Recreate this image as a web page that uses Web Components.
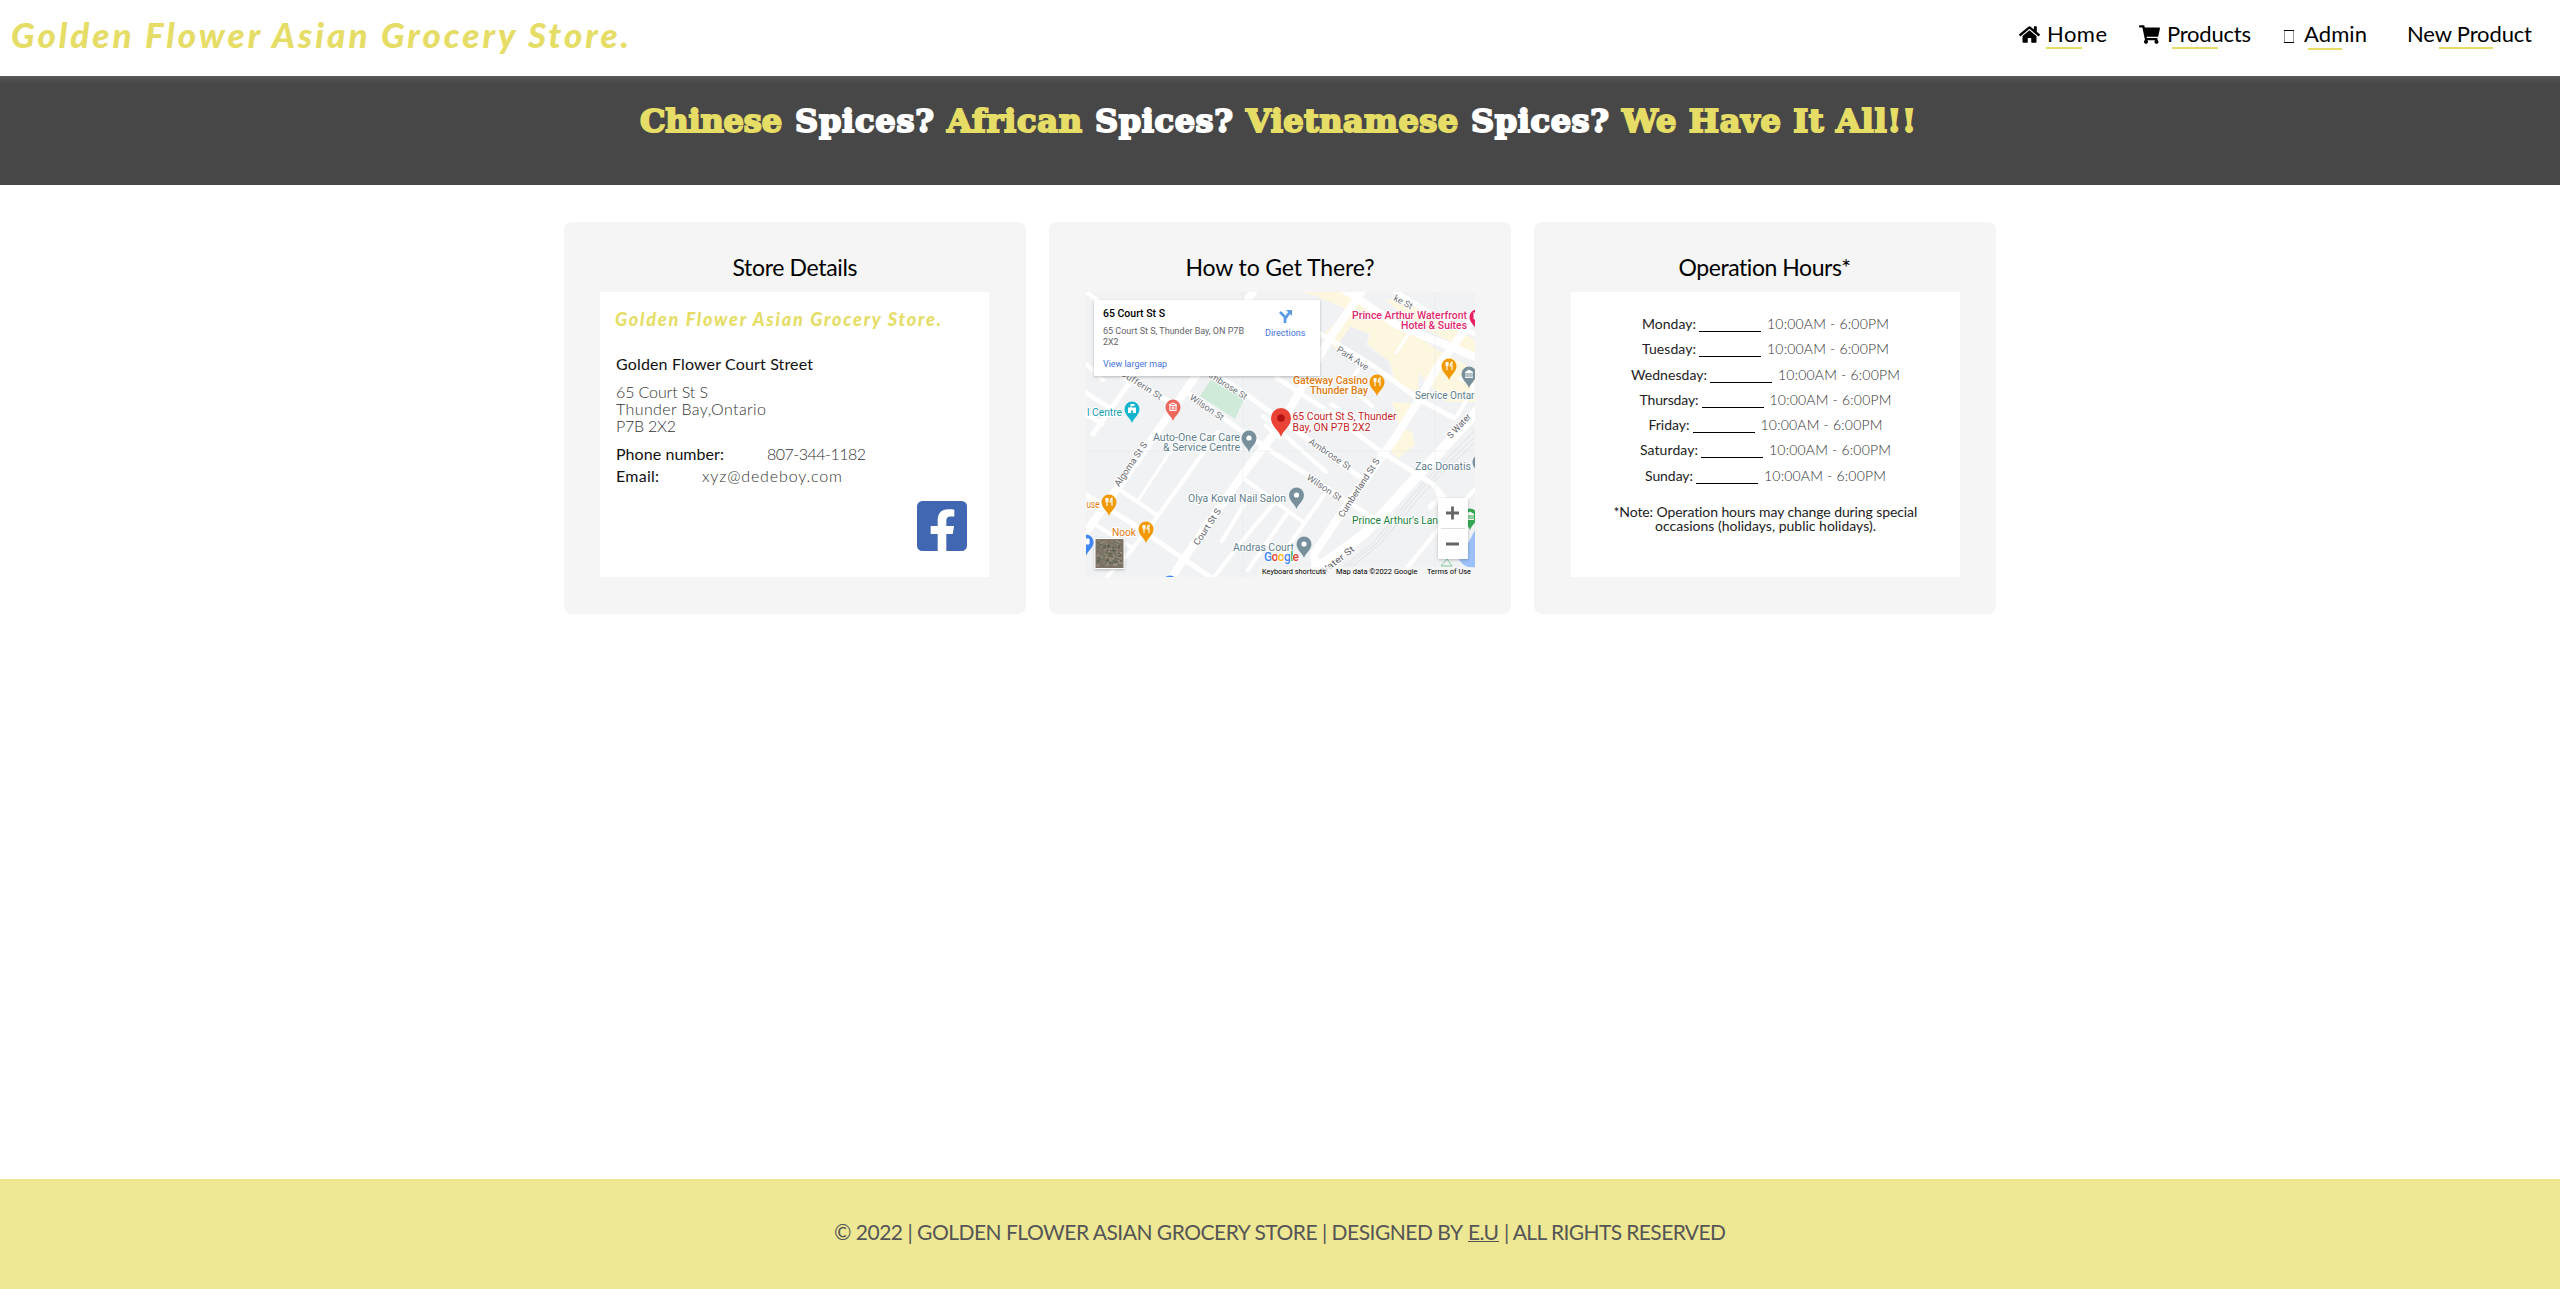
<!DOCTYPE html>
<html lang="en">
<head>
<meta charset="utf-8">
<title>Golden Flower Asian Grocery Store</title>
<style>
html,body{margin:0;background:#fff}
body{font-family:Lato,"Liberation Sans",sans-serif;color:#000;min-height:1289px}
</style>
</head>
<body>
<store-page></store-page>
<script>
const make = (name, html, setup) => customElements.define(name, class extends HTMLElement {
  constructor(){ super(); this.attachShadow({mode:'open'}); }
  connectedCallback(){
    this.shadowRoot.innerHTML = typeof html === 'function' ? html(this) : html;
    if (setup) setup(this);
  }
});

/* Page frame: header, banner, three cards, footer */
make('store-page', `<style>
:host{display:flex;flex-direction:column;height:1289px}
main{flex:1;display:flex;justify-content:center;gap:23px;padding-top:37px;align-items:flex-start}
</style>
<site-header></site-header>
<spice-banner></spice-banner>
<main>
<info-card heading="Store Details" w="125" inset="36"><store-details></store-details></info-card>
<info-card heading="How to Get There?" w="189" inset="37"><store-map></store-map></info-card>
<info-card heading="Operation Hours*" w="173" inset="37"><opening-hours></opening-hours></info-card>
</main>
<site-footer></site-footer>`);

make('site-header', `<style>
:host{display:flex;height:76px;justify-content:space-between;box-sizing:border-box;padding:0 27px 0 11px;background:#fff}
.logo{font:italic 900 35px/60px Lato,sans-serif;color:#e5dd66;padding-top:4px}
nav{display:flex;align-items:flex-start}
</style>
<div class="logo"><fit-text w="618">Golden Flower Asian Grocery Store.</fit-text></div>
<nav>
<nav-item icon="home" w="60" gap="8" ux="-2" uw="36" end="31">Home</nav-item>
<nav-item icon="cart" w="84" gap="8" ux="4" uw="46" end="32">Products</nav-item>
<nav-item icon="box" w="63" gap="11" ux="3" uw="34" end="40">Admin</nav-item>
<nav-item w="125" gap="0" ux="31" uw="54" end="0">New Product</nav-item>
</nav>`);

const icons = {
  home:'<svg width="21" height="19" viewBox="0 0 576 512"><path d="M280.37 148.26L96 300.11V464a16 16 0 0 0 16 16l112.06-.29a16 16 0 0 0 15.92-16V368a16 16 0 0 1 16-16h64a16 16 0 0 1 16 16v95.64a16 16 0 0 0 16 16.05L464 480a16 16 0 0 0 16-16V300L295.67 148.26a12.19 12.19 0 0 0-15.3 0zM571.6 251.47L488 182.56V44.05a12 12 0 0 0-12-12h-56a12 12 0 0 0-12 12v72.61L318.47 43a48 48 0 0 0-61 0L4.34 251.47a12 12 0 0 0-1.6 16.9l25.5 31A12 12 0 0 0 45.15 301l235.22-193.74a12.19 12.19 0 0 1 15.3 0L530.9 301a12 12 0 0 0 16.9-1.6l25.5-31a12 12 0 0 0-1.7-16.93z"/></svg>',
  cart:'<svg width="21" height="19" viewBox="0 0 576 512"><path d="M528.12 301.319l47.273-208C578.806 78.301 567.391 64 551.99 64H159.208l-9.166-44.81C147.758 8.021 137.93 0 126.529 0H24C10.745 0 0 10.745 0 24v16c0 13.255 10.745 24 24 24h69.883l70.248 343.435C147.325 417.1 136 435.222 136 456c0 30.928 25.072 56 56 56s56-25.072 56-56c0-15.674-6.447-29.835-16.824-40h209.647C430.447 426.165 424 440.326 424 456c0 30.928 25.072 56 56 56s56-25.072 56-56c0-22.172-12.888-41.332-31.579-50.405l5.517-24.276c3.413-15.018-8.002-29.319-23.403-29.319H218.117l-6.545-32h293.145c11.206 0 20.92-7.754 23.403-18.681z"/></svg>',
  box:'<svg width="10" height="19" viewBox="0 0 10 19"><path d="M.5 5V18M9.5 5V18" stroke="#999" fill="none"/><path d="M0 5.5H10M0 17.5H10" stroke="#000"/></svg>'
};
make('nav-item', el => `<style>
:host{display:flex;margin-right:${el.getAttribute('end')}px}
svg{display:block;margin:25px ${el.getAttribute('gap')}px 0 0;flex:none}
.t{display:flex;flex-direction:column;font:22px/26px Lato,sans-serif;padding-top:21px}
i{display:block;width:${el.getAttribute('uw')}px;height:2px;background:#e5dd66;margin:${el.getAttribute('icon')==='box'?1:0}px 0 0 ${el.getAttribute('ux')}px}
fit-text{margin:0 1px 0 -1px}
</style>${icons[el.getAttribute('icon')]||''}<div class="t"><fit-text w="${el.getAttribute('w')}"><slot></slot></fit-text><i></i></div>`);

make('spice-banner', `<style>
:host{display:flex;justify-content:flex-start;height:109px;box-sizing:border-box;padding:24.5px 0 0 640px;
background:linear-gradient(#5a5a5a 0,#4d4d4d 4px,#474747 9px);color:#e5dd66;font:bold 32px/40px "DejaVu Serif",serif;-webkit-text-stroke:2px currentColor;gap:13px}
b{color:#fff;font-weight:inherit}
</style>
<fit-text w="142">Chinese</fit-text><b><fit-text w="139">Spices?</fit-text></b>
<fit-text w="135">African</fit-text><b><fit-text w="138">Spices?</fit-text></b>
<fit-text w="212">Vietnamese</fit-text><b><fit-text w="138">Spices?</fit-text></b>
<fit-text w="294">We Have It All!!</fit-text>`);

make('info-card', el => `<style>
:host{display:flex;flex-direction:column;width:462px;height:392px;border-radius:8px;background:#f5f5f5}
h2{margin:0;padding:31px 0 11px;font:400 23px/28px Lato,sans-serif;display:flex;justify-content:center}
.panel{width:389px;height:285px;background:#fff;margin-left:${el.getAttribute('inset')}px}
</style><h2><fit-text w="${el.getAttribute('w')}">${el.getAttribute('heading')}</fit-text></h2><div class="panel"><slot></slot></div>`);

make('store-details', `<style>
:host{display:flex;flex-direction:column;padding:15px 22px 0 16px;height:270px;box-sizing:border-box;font:16px/17px Lato,sans-serif;color:#111}
.logo{font:italic 900 18px/24px Lato,sans-serif;color:#e5dd66;margin-left:-1px}
.name{margin-top:24px}
.addr{display:flex;flex-direction:column;margin-top:11px;font-weight:300;color:#333}
.row{display:flex;gap:43px;margin-top:11px}.row+.row{margin-top:5px}
.v{font-weight:300;color:#333}
.fb{align-self:flex-end;display:block;margin-top:17px;flex:none}
</style>
<fit-text class="logo" w="326">Golden Flower Asian Grocery Store.</fit-text>
<fit-text class="name" w="197">Golden Flower Court Street</fit-text>
<div class="addr"><fit-text w="92">65 Court St S</fit-text><fit-text w="150">Thunder Bay,Ontario</fit-text><fit-text w="60">P7B 2X2</fit-text></div>
<div class="row"><fit-text w="108">Phone number:</fit-text><fit-text class="v" w="99">807-344-1182</fit-text></div>
<div class="row"><fit-text w="43">Email:</fit-text><fit-text class="v" w="140">xyz@dedeboy.com</fit-text></div>
<svg class="fb" width="50" height="50" viewBox="0 32 448 448"><path fill="#4267b2" d="M400 32H48A48 48 0 0 0 0 80v352a48 48 0 0 0 48 48h137.25V327.69h-63V256h63v-54.64c0-62.15 37-96.48 93.67-96.48 27.14 0 55.52 4.84 55.52 4.84v61h-31.27c-30.81 0-40.42 19.12-40.42 38.73V256h68.78l-11 71.69h-57.78V480H400a48 48 0 0 0 48-48V80a48 48 0 0 0-48-48z"/></svg>`);

const days = [['Monday',54],['Tuesday',54],['Wednesday',76],['Thursday',59],['Friday',41],['Saturday',58],['Sunday',48]];
make('opening-hours', () => `<style>
:host{display:flex;flex-direction:column;align-items:center;padding-top:19px;font:14px/25.3px Lato,sans-serif;color:#222}
.row{display:flex;height:25.3px}
i{width:62px;height:1px;background:#000;margin:20px 6px 0 3px}
.time{font-weight:300;color:#333}
.note{display:flex;flex-direction:column;align-items:center;line-height:14.4px;margin-top:17px}
</style>${days.map(([d,w])=>`<div class="row"><fit-text w="${w}">${d}:</fit-text><i></i><fit-text class="time" w="122">10:00AM - 6:00PM</fit-text></div>`).join('')}
<div class="note"><fit-text w="304">*Note: Operation hours may change during special</fit-text><fit-text w="221">occasions (holidays, public holidays).</fit-text></div>`);

/* Map: street canvas drawn in a single SVG */
const road = (w, d) => `<path d="${d}" stroke-width="${w}"/>`;
const label = (x, y, w, t, c, o='') => `<text x="${x}" y="${y}" textLength="${w}" lengthAdjust="spacingAndGlyphs" fill="${c}" ${o}>${t}</text>`;
const street = (x, y, a, w, t, c='#70757a') => `<text transform="translate(${x} ${y}) rotate(${a})" textLength="${w}" lengthAdjust="spacingAndGlyphs" font-size="9" fill="${c}">${t}</text>`;
const glyphs = {
  food:'<path d="M-3-4v3q0 1 1 1v4M-1-4v3q0 1-1 1M-2-4v3M3 4v-8q-2 1-2 4h2" fill="none" stroke="#fff" stroke-width="1.1"/>',
  dot:'<circle r="2.6" fill="#fff"/>',
  civic:'<path d="M-4-1.5L0-4L4-1.5ZM-3-1v4M-1-1v4M1-1v4M3-1v4M-4 3.5h8" fill="#fff" stroke="#fff" stroke-width=".9"/>',
  hall:'<path d="M-4 4V-1.5H-1.5V-5H2.5V-3H-.5V-1.5H4V4H1V1.5H-1V4Z" fill="#fff"/>',
  med:'<path d="M-4-2L0-4L4-2M-3-1.5v5h6v-5ZM0-.7v3.4M-1.7 1h3.4" fill="none" stroke="#fff" stroke-width="1.1"/>',
  bag:'<path d="M-3-3h6v5h-6zM-4-4h2" fill="#fff" stroke="#fff"/>'
};
const pin = (x, y, c, g) => `<g transform="translate(${x} ${y})"><path d="M0 14C-1.5 9-7.5 6-7.5 0A7.5 7.5 0 1 1 7.5 0C7.5 6 1.5 9 0 14Z" fill="${c}"/>${glyphs[g]}</g>`;
let tiles = '', seed = 7;
const rnd = () => (seed = (seed * 16807) % 2147483647) / 2147483647;
for (let i = 0; i < 230; i++) {
  const px = 10.5 + rnd() * 24, py = 248 + rnd() * 25;
  const c = ['#5f6650','#a39686','#857a6b','#6b7260','#56604c','#988a7c','#8d8276'][Math.floor(rnd() * 7)];
  tiles += `<rect x="${px.toFixed(1)}" y="${py.toFixed(1)}" width="${(1 + rnd() * 2).toFixed(1)}" height="${(1 + rnd()).toFixed(1)}" fill="${c}"/>`;
}
const G='#607d8b', O='#e07a10';
make('store-map', () => `<style>:host{display:block;width:389px;height:285px}svg{display:block}text{font-family:Roboto,sans-serif}</style>
<svg width="389" height="285" viewBox="0 0 389 285" font-size="10">
<defs><filter id="sh" x="-10%" y="-10%" width="120%" height="130%"><feDropShadow dx="0" dy="1" stdDeviation="1.5" flood-opacity=".25"/></filter></defs>
<rect width="389" height="285" fill="#f1f2f4"/>
<g fill="#fef7e0">
<path d="M216 0H266L286 14L311 31L306 55L325 70L333 78L332 100L310 93L304 70L281 52L284 42L265 35L250 58L238 42L262 18L230 4Z"/>
<path d="M311 31L355 60L389 78V62L345 40L309 16L300 8L311 6L350 26L389 48V110H360L342 92L325 70L306 55Z"/>
<path d="M306 110L330 112L322 128L311 143L299 155L312 166L329 153L326 140L314 135Z"/>
</g>
<path d="M265 34L282 43L279 54L303 70L302 87L250 55Z" fill="#eceef1"/>
<path d="M126 86L160 103L149 127L114 104Z" fill="#cfead9"/>
<path d="M389 238L380 255L373 268Q380 277 389 276Z" fill="#9cc0f9"/>
<g fill="none" stroke="#dfe2e5" stroke-width="1"><path d="M244 285L287 251L335 193L389 138M248 285L291 251L339 193L389 145M253 285L294 252L346 191L389 150"/></g>
<g fill="none" stroke="#fff" stroke-linecap="round">
${road(8,'M-4 246L69 143L109 85L167 0')}${road(8,'M83 290L97 268L157 182L194 134L244 46L278 -4')}
${road(8,'M232 290L228 262L254 223L311 143L331 111L351 76L392 20')}
${road(10,'M228 278L277 243L351 163L394 116')}${road(8,'M256 -4L311 33L394 67')}
${road(5,'M305 -3L354 27L394 44')}${road(5,'M228 38L286 73L334 108L368 126')}
${road(5,'M80 49L161 103L274 185')}${road(5,'M101 100L137 126L194 165L287 226')}
${road(5,'M191 86L237 116L294 159L348 193L356 210M348 193L357 204L344 215')}
${road(4,'M-3 -2L22 15')}${road(4,'M-3 69L17 88')}${road(5,'M-3 99L24 116M-3 120L16 132')}
${road(5,'M-3 201L44 230L127 287')}${road(5,'M20 73L37 84L88 112')}${road(5,'M44 90L7 142')}
${road(4,'M34 198L71 223')}${road(3,'M86 157L51 210')}${road(4,'M132 140L71 225L44 260L18 288')}
${road(4,'M10 233L45 255')}${road(4,'M157 186L194 213L217 230')}${road(4,'M163 204L136 249')}
${road(4,'M190 209L161 243L128 285')}${road(4,'M202 220L162 278')}${road(4,'M238 203L194 266')}
${road(4,'M245 112L284 137M272 78L262 94L286 114')}${road(3,'M310 61L322 43')}${road(4,'M374 86L389 94M389 93L371 124')}
${road(4,'M389 197L350 240L311 288')}${road(4,'M177 124L240 180M194 145L180 134')}
</g>
<path d="M0 159H389M157 0V285M349 0V285" stroke="#e2e5e7" stroke-width=".5"/>
<g stroke="#fff" stroke-width="2" paint-order="stroke" stroke-linejoin="round">
${street(33,195,-56,51,'Algoma St S','#5f6368')}${street(112,254,-56,42,'Court St S','#5f6368')}
${street(257,226,-57,68,'Cumberland St S','#5f6368')}${street(222,151,34,49,'Ambrose St')}
${street(220,187,34,40,'Wilson St')}${street(103,107,34,39,'Wilson St')}${street(119,83,32,47,'Ambrose St')}
${street(34,83,32,47,'Dufferin St')}${street(250,59,33,36,'Park Ave')}${street(307,8,28,20,'ke St')}
${street(236,284,-38,42,'Water St','#5f6368')}${street(365,147,-47,30,'S Water','#5f6368')}
${label(266,26.7,115,'Prince Arthur Waterfront','#e0296f','font-weight="500"')}${label(315,37,66,'Hotel &amp; Suites','#e0296f','font-weight="500"')}
${label(207,92,75,'Gateway Casino',O,'font-weight="500"')}${label(224,102.3,58,'Thunder Bay',O,'font-weight="500"')}
${label(206.5,128.3,104,'65 Court St S, Thunder','#c5221f')}${label(206.5,138.6,78,'Bay, ON P7B 2X2','#c5221f')}
${label(329,107,59.5,'Service Ontar',G)}${label(329,178,56,'Zac Donatis',G)}
${label(266,232,86,"Prince Arthur's Lan",'#188038')}${label(102,210,98,'Olya Koval Nail Salon',G)}
${label(147,259,61,'Andras Court',G)}${label(26,244,24,'Nook',O)}${label(0.5,216,13,'use',O)}
${label(67,148.5,87,'Auto-One Car Care',G)}${label(77,158.7,77,'&amp; Service Centre',G)}
${label(1,124,35,'l Centre','#129eaf')}
</g>
${pin(46,117,'#12b5cb','hall')}${pin(87,115,'#ee675c','med')}${pin(291,90,'#f29900','food')}${pin(363,74,'#f29900','food')}
${pin(383,82,'#78909c','civic')}${pin(23,210,'#f29900','food')}${pin(60,237,'#f29900','food')}${pin(0,250,'#4285f4','bag')}
${pin(84,291,'#4285f4','dot')}${pin(163,146,'#78909c','dot')}${pin(210.5,203,'#78909c','dot')}${pin(218,252,'#78909c','dot')}
${pin(394,170,'#78909c','dot')}${pin(391,25,'#e91e63','bag')}${pin(384,224,'#34a853','civic')}
<path d="M195 145C193 138 185 135 185 126A10 10 0 1 1 205 126C205 135 197 138 195 145Z" fill="#ea4335"/><circle cx="195" cy="126" r="3.8" fill="#b31412"/>
<path d="M355 274L361 267L366 274Z" fill="none" stroke="#81c995"/>
<g filter="url(#sh)"><rect x="8" y="8" width="226" height="76" rx="1" fill="#fff"/></g>
${label(17,25,62,'65 Court St S','#000','font-size="11" font-weight="500"')}
${label(17,42,141,'65 Court St S, Thunder Bay, ON P7B','#5f6368','font-size="9"')}${label(17,53,15.5,'2X2','#5f6368','font-size="9"')}
${label(17,75,64,'View larger map','#4272db','font-size="9"')}${label(179,44,40.5,'Directions','#4272db','font-size="9"')}
<g fill="none" stroke="#5b9be6" stroke-width="2.7"><path d="M194 20L199 25V31M199 27L203 21H204"/></g><path d="M200 18h6v6z" fill="#5b9be6"/>
<g filter="url(#sh)"><rect x="352" y="206" width="30" height="61" rx="1" fill="#fff"/></g>
<path d="M355 236.5H379" stroke="#ddd"/><path d="M360 221H373M366.5 214.5V227.5M360 252H373" stroke="#666" stroke-width="2.8"/>
<g filter="url(#sh)"><rect x="8.5" y="246" width="30" height="31" rx="1" fill="#fff"/></g>
<rect x="9.5" y="247" width="28" height="29" fill="#7d7467"/>${tiles}
<text x="178" y="269" font-size="12" font-weight="500" textLength="35" stroke="#fff" stroke-width="1.5" paint-order="stroke"><tspan fill="#4285f4">G</tspan><tspan fill="#ea4335">o</tspan><tspan fill="#fbbc05">o</tspan><tspan fill="#4285f4">g</tspan><tspan fill="#34a853">l</tspan><tspan fill="#ea4335">e</tspan></text>
<rect x="173" y="275" width="216" height="10" fill="#f5f5f5" opacity=".75"/>
${label(176,281.5,64,'Keyboard shortcuts','#000','font-size="8"')}${label(250,281.5,81.5,'Map data ©2022 Google','#000','font-size="8"')}${label(341,281.5,44,'Terms of Use','#000','font-size="8"')}
</svg>`);

make('site-footer', `<style>
:host{display:flex;justify-content:center;height:110px;box-sizing:border-box;padding-top:40px;background:#eee895;color:#555;font:21px/26px Lato,sans-serif}
.line{display:flex;gap:5px}
.link{height:22px;border-bottom:1.5px solid #555}
</style><div class="line"><fit-text w="629">© 2022 | GOLDEN FLOWER ASIAN GROCERY STORE | DESIGNED BY</fit-text><fit-text class="link" w="31">E.U</fit-text><fit-text w="222">| ALL RIGHTS RESERVED</fit-text></div>`);

/* Sets its text to an exact measure by adjusting the tracking */
make('fit-text', el => `<style>:host{display:block;width:${el.getAttribute('w')}px;white-space:nowrap;flex:none}span{display:inline-block}</style><span><slot></slot></span>`,
el => {
  const span = el.shadowRoot.querySelector('span');
  const slot = el.querySelector('slot');
  const text = slot ? slot.assignedNodes().map(n => n.textContent).join('') : el.textContent;
  const natural = span.getBoundingClientRect().width;
  span.style.letterSpacing = (el.getAttribute('w') - natural) / Math.max(1, text.length - 1) + 'px';
});
</script>
</body>
</html>
